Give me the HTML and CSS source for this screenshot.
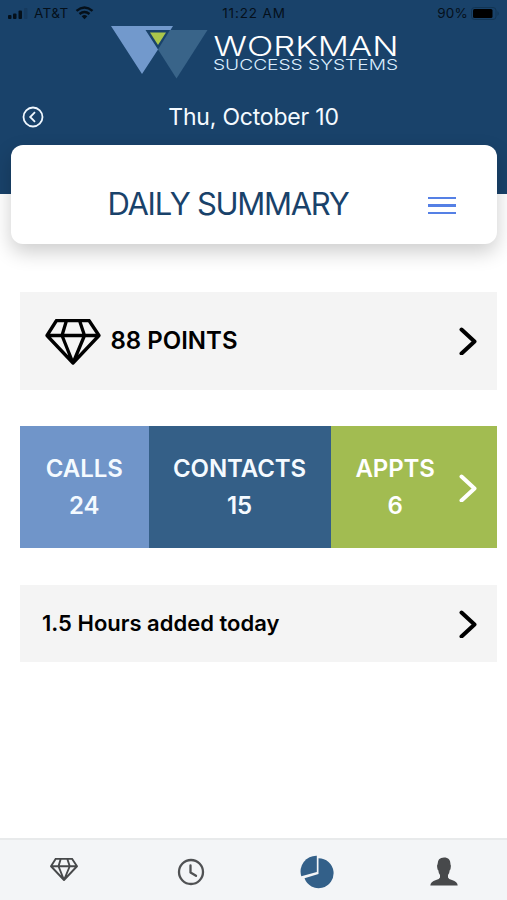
FILE: index.html
```html
<!DOCTYPE html>
<html lang="en">
<head>
<meta charset="utf-8">
<title>Daily Summary</title>
<link rel="stylesheet" href="styles.css">
</head>
<body>
<svg class="defs" aria-hidden="true">
  <symbol id="gem" viewBox="0 0 56 46">
    <path d="M11.5 1.5H44L54 16.500L28 44 2 16.500ZM2 16.500H54M21.500 1.500L17 16.500 28 44 39.500 16.500 34.500 1.500"/>
  </symbol>
  <symbol id="chevron" viewBox="0 0 18 28"><path d="M2.500 2.500L15.500 14.500 2.500 26.500"/></symbol>
</svg>
<div class="app">
  <header class="header">
    <div class="status">
      <div class="status-side">
        <svg width="22" height="14" viewBox="0 0 22 14"><rect x="0" y="9" width="3.500" height="4" rx="1"/><rect x="5" y="7.500" width="3.500" height="5.500" rx="1"/><rect x="10.500" y="4.500" width="3.500" height="8.500" rx="1"/><rect x="16" y="2" width="3.500" height="11" rx="1" opacity=".15"/></svg>
        <span class="carrier">AT&amp;T</span>
        <svg class="wifi" width="19" height="14" viewBox="0 0 19 14"><path d="M1.500 4.800Q9.500-2 17.500 4.800M4.500 8Q9.500 3.800 14.500 8" fill="none" stroke="#05101a" stroke-width="2.400"/><path d="M6.700 10.200Q9.500 8 12.300 10.200L9.500 13.200Z"/></svg>
      </div>
      <span class="time">11:22 AM</span>
      <div class="status-side status-right">
        <span class="battery-text">90%</span>
        <svg width="29" height="13" viewBox="0 0 29 13"><rect x=".5" y=".5" width="24.500" height="12" rx="3" fill="none" stroke="#123554"/><rect x="2" y="2" width="19.500" height="9" rx="1.500" fill="#000"/><path d="M26.500 4Q29 6.500 26.500 9Z" fill="#123554"/></svg>
      </div>
    </div>
    <svg class="logo" width="290" height="54" viewBox="110 25 290 54" role="img" aria-label="Workman Success Systems">
      <path fill="#7299cc" d="M111 26H173L170.500 30H145.500L158 49.500 142 74Z"/>
      <path fill="#396489" d="M170 30H207.500L176.500 78.500 158 49.500Z"/>
      <path fill="#aac64b" d="M150 32.500H166L158 45Z"/>
      <text class="brand" x="213.500" y="55.700" textLength="185" lengthAdjust="spacingAndGlyphs">WORKMAN</text>
      <text class="brand-sub" x="213" y="70.300" textLength="185" lengthAdjust="spacingAndGlyphs">SUCCESS SYSTEMS</text>
    </svg>
    <div class="date-row">
      <svg class="back" width="22" height="22" viewBox="0 0 22 22"><circle cx="11" cy="11" r="9.500"/><path d="M13 6.200L8.200 11 13 15.800"/></svg>
      <span class="date">Thu, October 10</span>
    </div>
  </header>
  <section class="title-card">
    <h1>DAILY SUMMARY</h1>
    <div class="menu"><i></i><i></i><i></i></div>
  </section>
  <main>
    <section class="panel points">
      <svg class="gem-large"><use href="#gem"/></svg>
      <span class="points-text">88 POINTS</span>
      <svg class="chevron"><use href="#chevron"/></svg>
    </section>
    <section class="stats">
      <div class="stat calls"><span>CALLS</span><b>24</b></div>
      <div class="stat contacts"><span>CONTACTS</span><b>15</b></div>
      <div class="stat appts"><div class="stat-body"><span>APPTS</span><b>6</b></div><svg class="chevron light"><use href="#chevron"/></svg></div>
    </section>
    <section class="panel hours">
      <span class="hours-text">1.5 Hours added today</span>
      <svg class="chevron"><use href="#chevron"/></svg>
    </section>
  </main>
  <nav class="tabs">
    <div><svg class="gem-small"><use href="#gem"/></svg></div>
    <div><svg class="clock" width="28" height="28" viewBox="0 0 28 28"><circle cx="14" cy="14" r="12"/><path d="M13.500 7.500V14.500L19 17.800"/></svg></div>
    <div><svg width="34" height="34" viewBox="0 0 34 34" fill="#336089"><path d="M16.800.8V17L1.300 21.300A15.700 15.700 0 0 1 16.800.8Z"/><path d="M18.500 3.200A15 15 0 1 1 4.500 23.300L18.500 19Z"/></svg></div>
    <div><svg width="28" height="29" viewBox="0 0 28 29" fill="#47494b"><path d="M14 .5C18.500.5 20.500 3 20.500 7.500Q21.300 8 20.600 11.500 20.300 13 19.700 13.200 19.500 16 18 18V20.500Q18.500 22 22 23 27.500 24.500 27.700 28.500H.3Q.5 24.500 6 23 9.500 22 10 20.500V18Q8.500 16 8.300 13.200 7.600 13 7.400 11.500 6.700 8 7.500 7.500 7.500.5 14 .5Z"/></svg></div>
  </nav>
</div>
</body>
</html>
```
FILE: styles.css
```css
* { box-sizing: border-box; }
body { margin: 0; background: #fff; font-family: Inter, "Liberation Sans", sans-serif; }
svg { display: block; flex: none; }
.defs { display: none; }
.app { height: 900px; display: flex; flex-direction: column; overflow: hidden; }

.header { flex: none; height: 193.500px; background: #19426a; }
.status { height: 25px; padding: 1px 7px 0 8px; display: grid; grid-template-columns: 1fr auto 1fr; align-items: center; color: #05101a; fill: #05101a; font-size: 13.500px; }
.status-side { display: flex; align-items: center; }
.status-right { justify-content: flex-end; gap: 3px; }
.carrier { margin-left: 4px; letter-spacing: .4px; }
.time { letter-spacing: .85px; }
.battery-text { letter-spacing: .2px; }
.wifi { margin-left: 6px; }
.logo { margin-left: 110px; }
.brand { font-size: 27.500px; font-weight: 300; fill: #fff; }
.brand-sub { font-size: 14px; font-weight: 300; fill: #dcefff; }
.date-row { height: 38px; margin-top: 19px; padding-left: 22px; display: grid; grid-template-columns: 22px 1fr 22px; align-items: center; padding-right: 22px; }
.back { fill: none; stroke: #f0f8ff; stroke-width: 1.800; }
.date { text-align: center; color: #f4faff; font-size: 23px; letter-spacing: -.2px; }

.title-card { position: relative; flex: none; height: 99px; margin: -48.500px 10.500px 0 11px; padding: 19px 41px 0 96.500px; display: flex; align-items: center; justify-content: space-between; background: #fff; border-radius: 12px; box-shadow: 0 8px 20px rgba(0, 0, 0, .2); }
h1 { margin: -2px 0 0; color: #19426a; font-size: 31px; font-weight: 400; letter-spacing: -1.300px; white-space: nowrap; }
.menu { width: 28px; margin-top: 3px; display: grid; gap: 5px; }
.menu i { height: 2.300px; background: #5580e5; }

main { flex: 1; padding: 48px 10px 0 20px; }
.panel { display: flex; align-items: center; background: #f4f4f4; padding-right: 20px; }
.panel .chevron { margin-left: auto; }
.points { height: 98px; padding-left: 24.500px; }
.gem-large { width: 56px; height: 46px; margin-top: 2px; fill: none; stroke: #000; stroke-width: 3.300; stroke-linejoin: round; }
.points-text { margin: -2px 0 0 10px; font-size: 24px; font-weight: 600; }
.chevron { width: 18px; height: 28px; fill: none; stroke: #000; stroke-width: 4; stroke-linecap: round; stroke-linejoin: round; }
.light { stroke: #fff; }
.stats { height: 122px; margin: 36px 0 37px; display: grid; grid-template-columns: 128.500px 182px 1fr; color: #f4faff; font-size: 24px; font-weight: 600; line-height: 37px; letter-spacing: -.1px; }
.stat { display: flex; flex-direction: column; align-items: center; justify-content: center; padding-bottom: 1px; }
.stat b { font-weight: 600; }
.calls { background: #7095c9; }
.contacts { background: #345f87; }
.appts { flex-direction: row; justify-content: space-between; padding: 0 20px 1px 25px; background: #a2bc51; color: #fff; }
.appts .chevron { margin-top: 2px; }
.stat-body { display: flex; flex-direction: column; align-items: center; }
.hours { height: 77px; padding-left: 22px; }
.hours-text { margin-top: -1px; font-size: 22px; font-weight: 600; }

.tabs { flex: none; height: 62px; display: grid; grid-template-columns: repeat(4, 1fr); border-top: 2px solid #e8eaeb; background: #f3f5f7; }
.tabs div { display: flex; align-items: center; justify-content: center; padding: 3px 0 0 1px; }
.gem-small { width: 28px; height: 23px; margin-top: -4px; fill: none; stroke: #47494b; stroke-width: 3.800; stroke-linejoin: round; }
.clock { fill: none; stroke: #505254; stroke-width: 2.300; stroke-linecap: round; stroke-linejoin: round; }
```
